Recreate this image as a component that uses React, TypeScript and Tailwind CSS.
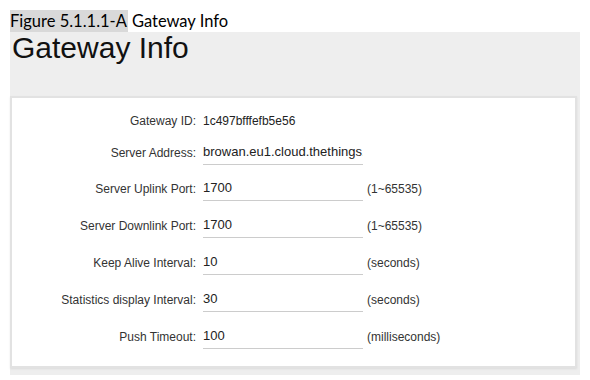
const rows = [
  { label: 'Server Address:', value: 'browan.eu1.cloud.thethings.network', unit: '' },
  { label: 'Server Uplink Port:', value: '1700', unit: '(1~65535)' },
  { label: 'Server Downlink Port:', value: '1700', unit: '(1~65535)' },
  { label: 'Keep Alive Interval:', value: '10', unit: '(seconds)' },
  { label: 'Statistics display Interval:', value: '30', unit: '(seconds)' },
  { label: 'Push Timeout:', value: '100', unit: '(milliseconds)' },
]

export default function App() {
  return (
    <div className="h-[380px] w-[590px] overflow-hidden bg-white pl-[10px] pt-[10px]">
      <p className="flex h-[22px] items-end font-['Lato',sans-serif] text-[16.5px] leading-[22px] text-black">
        <span className="bg-[#d9d9d9] pr-[1px]">Figure 5.1.1.1-A</span>
        <span className="pl-[4px]">Gateway Info</span>
      </p>

      <section className="h-[343px] w-[570px] bg-[#eeeeee] font-['Liberation_Sans',Arial,sans-serif]">
        <h1 className="pl-[2px] text-[30px] leading-[32px] text-[#111]">Gateway Info</h1>

        <div className="mt-[32px] h-[272px] w-[567px] border-2 border-[#e2e2e2] bg-white pt-[11px] shadow-[0_1px_2px_rgba(0,0,0,0.08)]">
          <div className="flex h-[24px] items-center">
            <span className="w-[184px] text-right text-[12px] text-[#333]">Gateway ID:</span>
            <span className="pl-[7px] text-[12px] text-[#222]">1c497bfffefb5e56</span>
          </div>

          <div className="mt-[7px] flex flex-col">
            {rows.map((row, index) => (
              <div
                key={row.label}
                className={`flex h-[25px] items-center ${index === 0 ? '' : index === 1 ? 'mt-[11px]' : 'mt-[12px]'}`}
              >
                <span className="w-[184px] text-right text-[12px] text-[#333]">{row.label}</span>
                <div className="ml-[7px] flex h-[25px] w-[160px] items-center overflow-hidden whitespace-nowrap border-b border-[#cccccc] text-[13px] text-[#222]">
                  {row.value}
                </div>
                <span className="pl-[4px] text-[12px] text-[#333]">{row.unit}</span>
              </div>
            ))}
          </div>
        </div>
      </section>
    </div>
  )
}
